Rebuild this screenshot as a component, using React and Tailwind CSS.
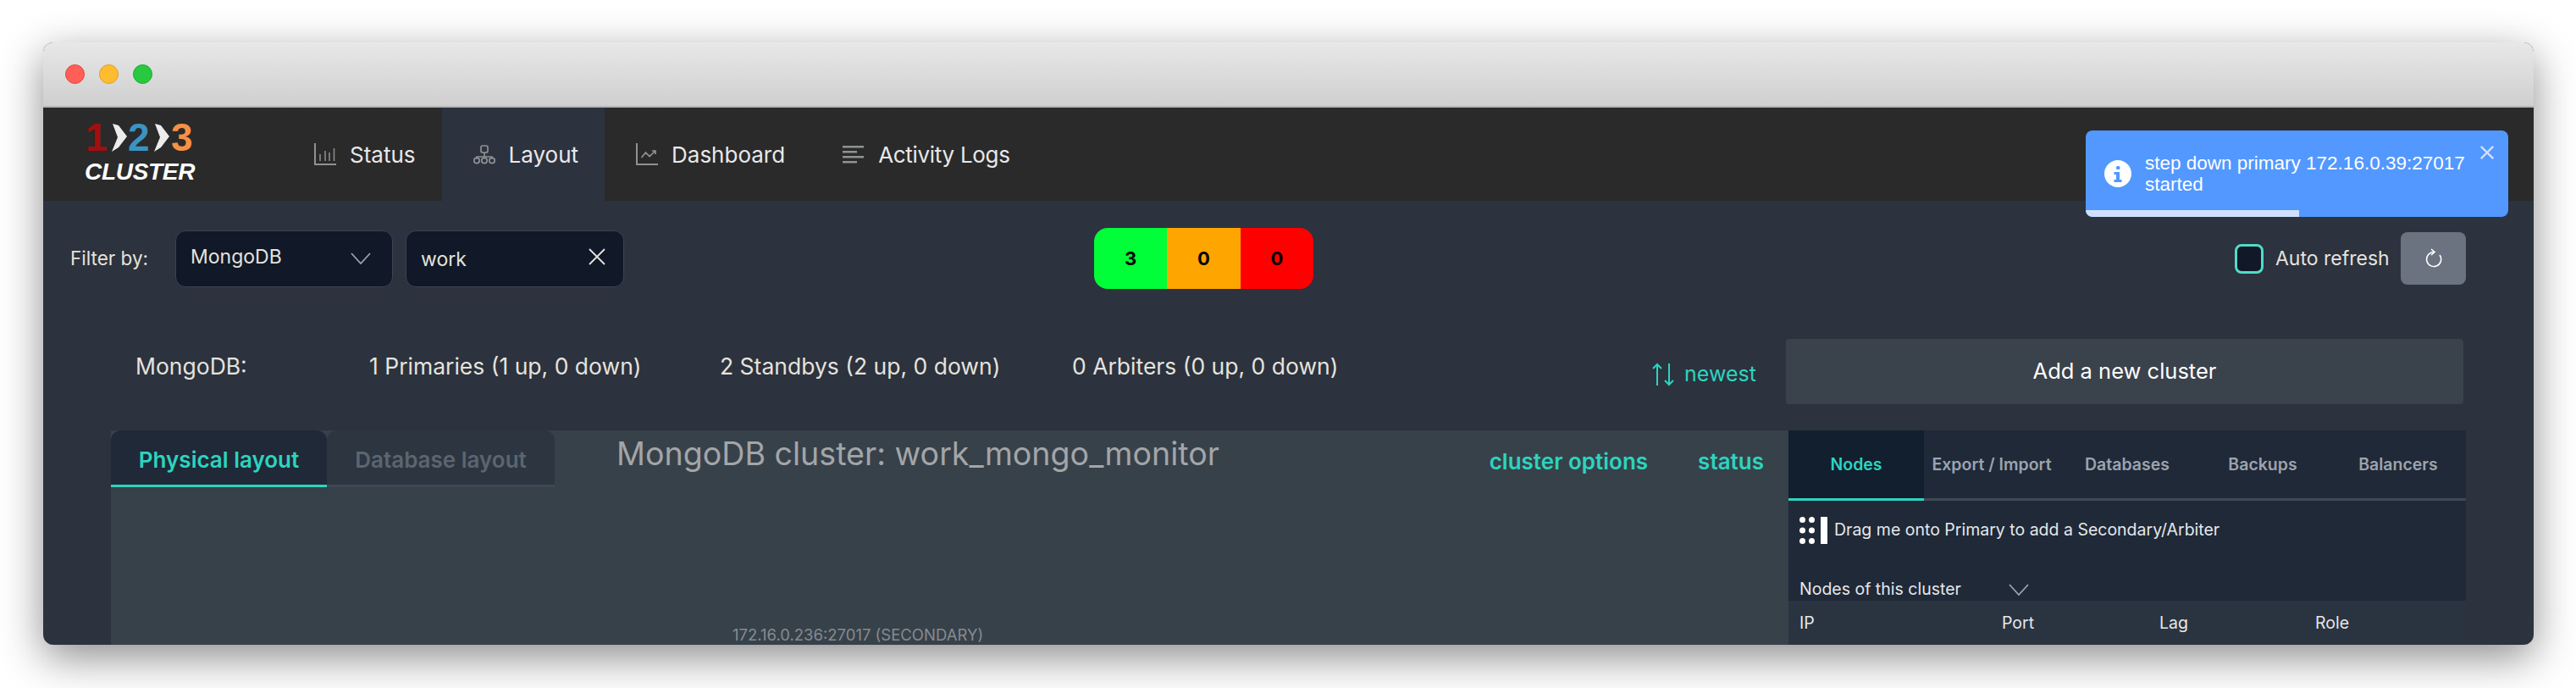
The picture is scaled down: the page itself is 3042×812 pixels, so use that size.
const font = { poppins: "font-['Inter','Liberation_Sans',sans-serif]" };

const StatusIcon = () => (
  <svg width="26" height="27" viewBox="0 0 26 27" fill="none" stroke="#8f9193" strokeWidth="1.5">
    <path d="M1 0v25h25" strokeWidth="2" />
    <path d="M7 13v8M13 9v12M18 11v10M23.5 6v15" />
  </svg>
);

const LayoutIcon = () => (
  <svg width="26" height="23" viewBox="0 0 26 23" fill="none" stroke="#8f9193" strokeWidth="1.7">
    <rect x="9" y="1" width="8" height="8" rx="2" />
    <path d="M13 9v5M4 16.5V14h18v2.5" />
    <circle cx="4" cy="18.5" r="3.2" />
    <circle cx="13" cy="18.5" r="3.2" />
    <circle cx="22" cy="18.5" r="3.2" />
  </svg>
);

const DashboardIcon = () => (
  <svg width="26" height="27" viewBox="0 0 26 27" fill="none" stroke="#8f9193" strokeWidth="1.7">
    <path d="M1 0v25h25" strokeWidth="2" />
    <path d="M6.5 17l5-6 4.5 4.5 7-6.5M19 9h4v4" />
  </svg>
);

const LogsIcon = () => (
  <svg width="26" height="22" viewBox="0 0 26 22" fill="#8f9193">
    <rect x="0" y="1" width="25" height="2.5" />
    <rect x="0" y="7" width="17" height="2.5" />
    <rect x="0" y="13" width="25" height="2.5" />
    <rect x="0" y="19" width="17" height="2.5" />
  </svg>
);

const Chevron = ({ className }) => (
  <svg width="24" height="14" viewBox="0 0 24 14" fill="none" stroke="currentColor" strokeWidth="1.8" className={className}>
    <path d="M1 1l11 12L23 1" />
  </svg>
);

const Cross = ({ size, width, className }) => (
  <svg width={size} height={size} viewBox="0 0 20 20" fill="none" stroke="currentColor" strokeWidth={width} className={className}>
    <path d="M1 1l18 18M19 1L1 19" />
  </svg>
);

const Arrow = ({ className }) => (
  <svg width="18" height="33" viewBox="0 0 18 33" fill="#ececec" className={className}>
    <path d="M1 0l7 2 10 13-10 13-8 5 7-17z" />
  </svg>
);

const Logo = () => (
  <div className="w-[283px] pl-[49px] pt-[17px] font-['Liberation_Sans',sans-serif]">
    <div className="flex items-center h-[36px] font-bold text-[46px] leading-none">
      <span className="text-[#a50e0e] w-[26px] ml-[1px]">1</span>
      <Arrow className="ml-[5px]" />
      <span className="text-[#3b93c4] w-[26px] ml-[1px]">2</span>
      <Arrow className="ml-[5px]" />
      <span className="text-[#f59146] w-[26px] ml-[2px]">3</span>
    </div>
    <div className="mt-[10px] text-white font-bold italic text-[28px] leading-[26px] tracking-[-0.3px]">CLUSTER</div>
  </div>
);

const NavItem = ({ icon, label, active, className = "" }) => (
  <div className={`flex items-center gap-[16px] pl-[37px] pr-[31px] h-full text-[26px] text-[#e8e8e8] ${active ? "bg-[#2c323e]" : ""} ${className}`}>
    <span className="w-[26px] flex justify-center">{icon}</span>
    <span>{label}</span>
  </div>
);

const Nav = () => (
  <div className="flex items-stretch h-[110px] bg-[#2a2a2a]">
    <Logo />
    <NavItem icon={<StatusIcon />} label="Status" />
    <NavItem icon={<LayoutIcon />} label="Layout" active />
    <NavItem icon={<DashboardIcon />} label="Dashboard" className="pl-[36px]" />
    <NavItem icon={<LogsIcon />} label="Activity Logs" className="tracking-[-0.3px]" />
  </div>
);

const Toast = () => (
  <div className="absolute left-[2412px] top-[104px] w-[499px] h-[102px] rounded-lg bg-[#5298ff] overflow-hidden text-white font-['Liberation_Sans',sans-serif]">
    <div className="flex items-center h-[94px] pl-[22px] pt-[8px]">
      <svg width="32" height="32" viewBox="0 0 32 32" className="shrink-0">
        <circle cx="16" cy="16" r="16" fill="#fff" />
        <rect x="14" y="7" width="4.5" height="4" rx="1.5" fill="#5298ff" />
        <path d="M11.5 14h6.5v9h2.500v3h-9v-3h2.500v-6h-2.500z" fill="#5298ff" />
      </svg>
      <div className="ml-[16px] text-[22.5px] leading-[25px] whitespace-nowrap">
        step down primary 172.16.0.39:27017
        <br />
        started
      </div>
    </div>
    <Cross size={16} width={3} className="absolute right-[17px] top-[18px] text-[#cfdfff]" />
    <div className="h-[8px] w-[252px] bg-[#cfe0ff]" />
  </div>
);

const FilterRow = () => (
  <div className="flex items-center h-[72px] mt-[32px] pl-[32px] pr-[80px]">
    <div className="w-[124px] text-[22.5px] text-[#e5e3dc]">Filter by:</div>
    <div className="flex items-center justify-between w-[257px] h-[67px] px-[17px] bg-[#111827] border border-[#3a4456] rounded-xl text-[23px] text-[#e5e3dc]">
      <span className="-mt-[4px]">MongoDB</span>
      <Chevron className="text-[#9ca3af] mr-[8px]" />
    </div>
    <div className="flex items-center justify-between w-[258px] h-[67px] ml-[15px] px-[17px] bg-[#111827] border border-[#3a4456] rounded-xl text-[23px] text-[#e5e3dc]">
      <span className="mt-[2px]">work</span>
      <Cross size={20} width={1.8} className="text-[#e5e3dc] mr-[4px] -mt-[5px]" />
    </div>
    <div className="flex w-[259px] h-[72px] ml-[555px] rounded-2xl overflow-hidden text-[22px] font-bold text-black">
      <div className="flex-1 flex items-center justify-center bg-[#00ff38]">3</div>
      <div className="flex-1 flex items-center justify-center bg-[#ffa500]">0</div>
      <div className="flex-1 flex items-center justify-center bg-[#ff0000]">0</div>
    </div>
    <div className="ml-auto flex items-center">
      <div className="w-[34px] h-[35px] rounded-lg bg-[#111827] border-[3px] border-[#4fdcc8]" />
      <span className="ml-[14px] w-[148px] text-[23px] text-[#e5e3dc]">Auto refresh</span>
      <div className="flex items-center justify-center w-[77px] h-[62px] rounded-lg bg-[#6b7280]">
        <svg width="20" height="24" viewBox="0 0 20 24" fill="none" stroke="#fff" strokeWidth="1.6">
          <path d="M10 4.5a8.5 8.5 0 1 0 7 3.500" />
          <path d="M7 1l4 3.5L7 8" />
        </svg>
      </div>
    </div>
  </div>
);

const StatsRow = () => (
  <div className="flex items-center h-[77px] mt-[59px] pl-[109px] pr-[83px] text-[26.5px] text-[#e5e3dc]">
    <div className="w-[276px] -mt-[12px]">MongoDB:</div>
    <div className="w-[414px] -mt-[12px]">1 Primaries (1 up, 0 down)</div>
    <div className="w-[416px] -mt-[12px]">2 Standbys (2 up, 0 down)</div>
    <div className="w-[685px] -mt-[12px]">0 Arbiters (0 up, 0 down)</div>
    <div className="flex items-center w-[158px] mt-[6px] text-[25px] text-[#2dd4bf]">
      <svg width="26" height="28" viewBox="0 0 26 28" fill="none" stroke="currentColor" strokeWidth="2" className="mr-[12px]">
        <path d="M6 27V2M1 7l5-5 5 5M20 1v25M15 21l5 5 5-5" />
      </svg>
      newest
    </div>
    <div className="flex-1 flex items-center justify-center h-[77px] bg-[#3a424c] rounded-sm text-[25.5px] text-white">Add a new cluster</div>
  </div>
);

const LeftPanel = () => (
  <div className="relative flex-1 bg-[#37414a]">
    <div className="flex items-start">
      <div className="flex items-center justify-center w-[255px] h-[67px] pt-[4px] rounded-t-xl bg-[#1f2937] border-b-[3px] border-[#2dd4bf] text-[26px] font-semibold text-[#2dd4bf]">
        Physical layout
      </div>
      <div className="flex items-center justify-center w-[269px] h-[67px] pt-[4px] rounded-t-xl bg-[#2d3640] border-b-[3px] border-[#3f4856] text-[26px] font-semibold text-[#5c6570]">
        Database layout
      </div>
      <div className="ml-[73px] mt-[6px] text-[37.6px] leading-[44px] text-[#a3a5a8]">MongoDB cluster: work_mongo_monitor</div>
      <div className="ml-auto mt-[17px] text-[26px] font-semibold text-[#2dd4bf]">cluster options</div>
      <div className="ml-[59px] mr-[29px] mt-[17px] text-[26px] font-semibold text-[#2dd4bf]">status</div>
    </div>
    <div className="absolute left-[734px] top-[230px] text-[18.5px] leading-[22px] text-[#858b91] whitespace-nowrap">172.16.0.236:27017 (SECONDARY)</div>
  </div>
);

const RightPanel = () => (
  <div className="w-[800px] bg-[#1f2937]">
    <div className="flex h-[83px] border-b-[3px] border-[#3f4856] text-[19.5px] font-semibold text-[#9ca3af]">
      <div className="w-[160px] h-[83px] flex items-center justify-center pt-[2px] bg-[#111f2e] border-b-[3px] border-[#2dd4bf] text-[#2dd4bf]">Nodes</div>
      <div className="w-[160px] flex items-center justify-center pt-[2px]">Export / Import</div>
      <div className="w-[160px] flex items-center justify-center pt-[2px]">Databases</div>
      <div className="w-[160px] flex items-center justify-center pt-[2px]">Backups</div>
      <div className="w-[160px] flex items-center justify-center pt-[2px]">Balancers</div>
    </div>
    <div className="flex items-center h-[32px] mt-[19px] ml-[13px]">
      <svg width="18" height="32" viewBox="0 0 18 32" fill="#fff">
        <circle cx="3.5" cy="3.5" r="3.5" /><circle cx="14.5" cy="3.5" r="3.5" />
        <circle cx="3.5" cy="16" r="3.5" /><circle cx="14.5" cy="16" r="3.5" />
        <circle cx="3.5" cy="28.5" r="3.5" /><circle cx="14.5" cy="28.5" r="3.5" />
      </svg>
      <div className="w-[8px] h-[32px] bg-white ml-[7px]" />
      <span className="ml-[8px] text-[19.5px] text-[#e5e7eb]">Drag me onto Primary to add a Secondary/Arbiter</span>
    </div>
    <div className="flex items-center h-[24px] mt-[42px] ml-[13px] text-[19.5px] text-[#e5e7eb]">
      <span className="w-[247px]">Nodes of this cluster</span>
      <Chevron className="text-[#9ca3af]" />
    </div>
    <div className="grid grid-cols-[239px_186px_184px_1fr] items-center h-[52px] mt-[1px] pl-[13px] pt-[2px] bg-[#2a3440] text-[19.5px] text-[#e5e7eb]">
      <div>IP</div>
      <div>Port</div>
      <div>Lag</div>
      <div>Role</div>
    </div>
  </div>
);

export default function App() {
  return (
    <div className={`h-[812px] w-[3042px] overflow-hidden bg-white pt-[50px] pl-[51px] ${font.poppins}`}>
      <div className="relative w-[2941px] h-[711px] rounded-xl overflow-hidden shadow-[0_15px_50px_rgba(0,0,0,0.45)] bg-[#2c323e]">
        <div className="flex items-center gap-[17px] h-[77px] pl-[26px] bg-gradient-to-b from-[#e8e8e8] to-[#cfcfcf] border-b-[2px] border-[#b5b5b5]">
          <div className="w-[23px] h-[23px] rounded-full bg-[#ff5f57] border border-[#e0443e]" />
          <div className="w-[23px] h-[23px] rounded-full bg-[#febc2e] border border-[#dea123]" />
          <div className="w-[23px] h-[23px] rounded-full bg-[#28c840] border border-[#1aab29]" />
        </div>
        <Nav />
        <Toast />
        <FilterRow />
        <StatsRow />
        <div className="flex h-[253px] mt-[31px] mx-[80px]">
          <LeftPanel />
          <RightPanel />
        </div>
      </div>
    </div>
  );
}
